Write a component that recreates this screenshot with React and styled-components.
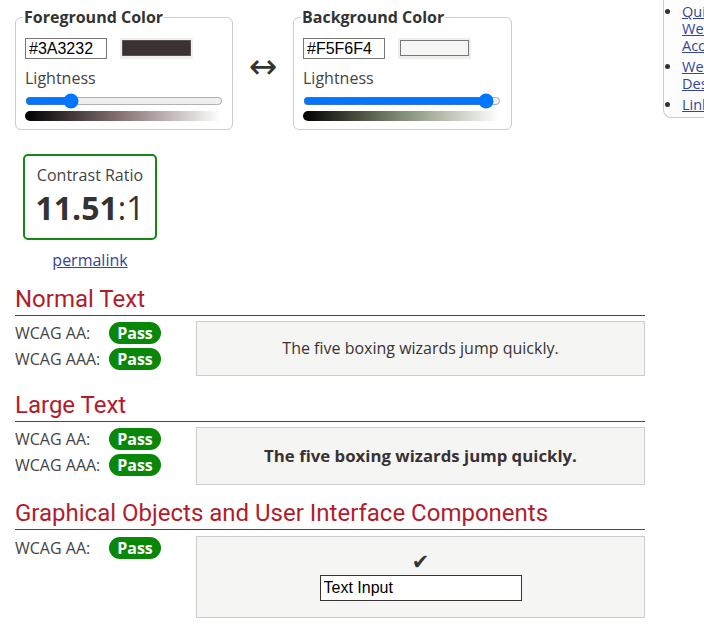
import React from "react";
import styled, { createGlobalStyle } from "styled-components";

const Global = createGlobalStyle`
  html, body { margin: 0; padding: 0; overflow: hidden; background: #fff; }
  body { font-family: "Open Sans", "Liberation Sans", sans-serif; color: #333; font-size: 16px; }
  * { box-sizing: border-box; }
`;

const Page = styled.div`
  display: flex;
  align-items: flex-start;
  padding-left: 15px;
  width: 704px;
  overflow: hidden;
`;

const Main = styled.main`
  width: 630px;
  padding-top: 6px;
  flex: none;
`;

const PickerRow = styled.div`
  display: flex;
  align-items: center;
`;

const Picker = styled.fieldset`
  margin: 0;
  width: ${(p) => p.$w}px;
  border: 1px solid #ccc;
  border-radius: 6px;
  padding: 0 9px 8px;
  min-width: 0;
`;

const Legend = styled.legend`
  font-weight: 700;
  font-size: 16px;
  line-height: 22px;
  padding: 0 1px;
  color: #333;
  margin-left: -2px;
`;

const InputRow = styled.div`
  display: flex;
  align-items: center;
  gap: 13px;
  margin-top: 10px;
`;

const HexInput = styled.input`
  width: 82px;
  height: 21px;
  border: 1px solid #767676;
  padding: 1px 3px;
  font-family: "Liberation Sans", Arial, sans-serif;
  font-size: 16px;
  color: #000;
  border-radius: 0;
`;

const Swatch = styled.div`
  width: 73px;
  height: 21px;
  background: #efefef;
  padding: 2px 2px 3px;
  display: flex;
`;

const SwatchInner = styled.div`
  flex: 1;
  border: 1px solid ${(p) => p.$border};
  background: ${(p) => p.$color};
`;

const Label = styled.div`
  margin-top: 8px;
  font-size: 16px;
  line-height: 22px;
  color: #444;
`;

const Range = styled.input`
  display: block;
  margin: 4px 0 0;
  width: 198px;
  height: 16px;
`;

const Gradient = styled.div`
  margin-top: 2px;
  width: 196px;
  height: 10px;
  border-radius: 5px 0 0 5px;
  background: linear-gradient(to right, #000, ${(p) => p.$mid}, #fff);
`;

const Swap = styled.div`
  width: 60px;
  text-align: center;
  font-family: "DejaVu Sans", sans-serif;
  font-size: 34px;
  color: #333;
  line-height: 1;
  padding-bottom: 4px;
`;

const RatioWrap = styled.div`
  margin: 24px 0 0 8px;
  width: 134px;
  display: flex;
  flex-direction: column;
  align-items: center;
`;

const RatioBox = styled.div`
  width: 134px;
  border: 2px solid #138a13;
  border-radius: 5px;
  padding: 8px 0 8px;
  text-align: center;
`;

const RatioLabel = styled.div`
  font-size: 16px;
  line-height: 22px;
  color: #444;
`;

const RatioValue = styled.div`
  font-size: 32px;
  line-height: 44px;
  color: #333;
  b { font-weight: 700; }
`;

const Link = styled.a`
  color: #34469a;
  text-decoration: underline;
  cursor: pointer;
`;

const Permalink = styled(Link)`
  margin-top: 10px;
  font-size: 16px;
  line-height: 20px;
`;

const Heading = styled.h2`
  margin: ${(p) => p.$mt ?? 15}px 0 0;
  font-family: Roboto, "Liberation Sans", sans-serif;
  font-weight: 400;
  font-size: 24px;
  line-height: 28px;
  color: #b21c2b;
  padding-bottom: 2px;
  border-bottom: 1px solid #a5202c;
`;

const Section = styled.div`
  display: flex;
  align-items: flex-start;
  margin-top: ${(p) => p.$mt ?? 5}px;
`;

const Results = styled.div`
  width: 181px;
  display: grid;
  grid-template-columns: 94px auto;
  row-gap: 4px;
  align-items: center;
  padding-top: 1px;
`;

const Criterion = styled.div`
  font-size: 16px;
  line-height: 22px;
  color: #444;
`;

const Badge = styled.span`
  justify-self: start;
  display: inline-block;
  width: 52px;
  height: 22px;
  line-height: 22px;
  border-radius: 11px;
  background: #098709;
  color: #fff;
  font-weight: 700;
  font-size: 16px;
  text-align: center;
`;

const Sample = styled.div`
  width: 449px;
  border: 1px solid #ccc;
  background: #f5f6f4;
  color: #3a3232;
  text-align: center;
  padding: ${(p) => p.$pad};
  font-size: ${(p) => p.$size}px;
  font-weight: ${(p) => (p.$bold ? 700 : 400)};
  line-height: ${(p) => p.$lh}px;
`;

const Check = styled.div`
  font-family: "DejaVu Sans", sans-serif;
  font-size: 21px;
  line-height: 22px;
  color: #3a3232;
`;

const SampleInput = styled.input`
  margin-top: 2px;
  width: 202px;
  height: 26px;
  border: 1px solid #3a3232;
  background: #fff;
  font-family: "Liberation Sans", Arial, sans-serif;
  font-size: 16px;
  padding: 1px 3px;
  color: #000;
`;

const Sidebar = styled.aside`
  margin-left: 18px;
  width: 260px;
  flex: none;
  border: 1px solid #ccc;
  border-top: none;
  border-radius: 0 0 0 8px;
  background: #fdfdfd;
  padding: 3px 0 4px 18px;
`;

const List = styled.ul`
  margin: 0;
  padding: 0;
  list-style: disc;
  font-size: 14.5px;
  line-height: 17px;
  color: #333;
  li { margin-bottom: 4px; }
  li:last-child { margin-bottom: 0; }
`;

function ColorPicker({ title, hex, mid, value, w, border }) {
  return (
    <Picker $w={w}>
      <Legend>{title}</Legend>
      <InputRow>
        <HexInput defaultValue={hex} />
        <Swatch>
          <SwatchInner $color={hex} $border={border} />
        </Swatch>
      </InputRow>
      <Label>Lightness</Label>
      <Range type="range" min="0" max="100" defaultValue={value} />
      <Gradient $mid={mid} />
    </Picker>
  );
}

function ResultRow({ label }) {
  return (
    <>
      <Criterion>{label}</Criterion>
      <Badge>Pass</Badge>
    </>
  );
}

export default function App() {
  return (
    <>
      <Global />
      <Page>
        <Main>
          <PickerRow>
            <ColorPicker title="Foreground Color" hex="#3A3232" mid="#897676" value={21} w={218} border="#5a5252" />
            <Swap>↔</Swap>
            <ColorPicker title="Background Color" hex="#F5F6F4" mid="#808c73" value={96} w={219} border="#777" />
          </PickerRow>

          <RatioWrap>
            <RatioBox>
              <RatioLabel>Contrast Ratio</RatioLabel>
              <RatioValue>
                <b>11.51</b>:1
              </RatioValue>
            </RatioBox>
            <Permalink>permalink</Permalink>
          </RatioWrap>

          <Heading>Normal Text</Heading>
          <Section>
            <Results>
              <ResultRow label="WCAG AA:" />
              <ResultRow label="WCAG AAA:" />
            </Results>
            <Sample $pad="16px 0" $size={16} $lh={21}>
              The five boxing wizards jump quickly.
            </Sample>
          </Section>

          <Heading>Large Text</Heading>
          <Section>
            <Results>
              <ResultRow label="WCAG AA:" />
              <ResultRow label="WCAG AAA:" />
            </Results>
            <Sample $pad="16px 0" $size={16.8} $lh={24} $bold>
              The five boxing wizards jump quickly.
            </Sample>
          </Section>

          <Heading $mt={14}>Graphical Objects and User Interface Components</Heading>
          <Section $mt={6}>
            <Results>
              <ResultRow label="WCAG AA:" />
            </Results>
            <Sample $pad="14px 0 16px" $size={16} $lh={20}>
              <Check>✔</Check>
              <SampleInput defaultValue="Text Input" />
            </Sample>
          </Section>
        </Main>

        <Sidebar>
          <List>
            <li>
              <Link>Quick Reference:<br />Web Content<br />Accessibility</Link>
            </li>
            <li>
              <Link>Web Accessibility for<br />Designers</Link>
            </li>
            <li>
              <Link>Link Contrast Checker</Link>
            </li>
          </List>
        </Sidebar>
      </Page>
    </>
  );
}
